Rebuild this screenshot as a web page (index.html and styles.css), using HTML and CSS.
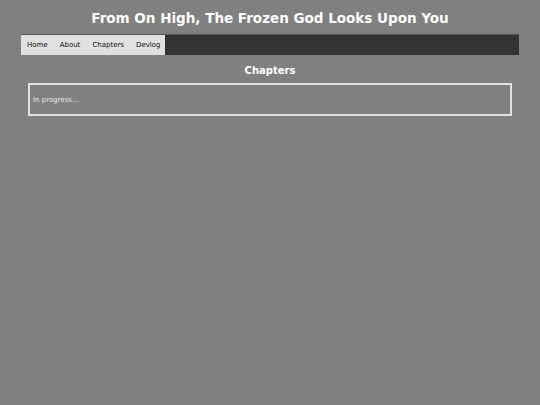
FILE: index.html
```html
<!DOCTYPE html>
<html lang="en">
<head>
    <meta charset="UTF-8">
    <meta name="viewport" content="width=device-width, initial-scale=1.0">
    <title>Chapters - From On High, The Frozen God Looks Upon You</title>
    <link rel="stylesheet" href="styles.css">
</head>
<body>
    <h1 class="site-title">From On High, The Frozen God Looks Upon You</h1>

    <nav class="topnav">
        <ul class="nav-links">
            <li><a href="#">Home</a></li>
            <li><a href="#">About</a></li>
            <li><a href="#">Chapters</a></li>
            <li><a href="#">Devlog</a></li>
        </ul>
    </nav>

    <main class="content">
        <h2 class="page-title">Chapters</h2>
        <div class="chapter-list">
            <p>In progress...</p>
        </div>
    </main>
</body>
</html>
```

FILE: styles.css
```css
* {
    margin: 0;
    padding: 0;
    box-sizing: border-box;
}

body {
    font-family: 'DejaVu Sans', Verdana, sans-serif;
    background: #808080;
    color: #fff;
    min-height: 100vh;
    padding-top: 9px;
}

.site-title {
    text-align: center;
    font-size: 13.5px;
    font-weight: bold;
    line-height: 18px;
    margin-bottom: 7px;
}

.topnav {
    width: 498px;
    margin: 0 auto;
    background: #333;
    border-top: 1px solid #555;
    height: 21px;
}

.nav-links {
    list-style: none;
    display: flex;
    width: 144px;
    height: 100%;
    background: #e0e0e0;
}

.nav-links a {
    display: block;
    padding: 0 6px;
    line-height: 20px;
    font-size: 7px;
    color: #111;
    text-decoration: none;
}

.content {
    width: 484px;
    margin: 0 auto;
}

.page-title {
    text-align: center;
    font-size: 10px;
    font-weight: bold;
    line-height: 14px;
    margin: 9px 0 5px;
}

.chapter-list {
    border: 2px solid #e0e0e0;
    height: 33px;
    display: flex;
    align-items: center;
    padding: 0 3px;
}

.chapter-list p {
    font-size: 7px;
    color: #e8e8e8;
}
```
